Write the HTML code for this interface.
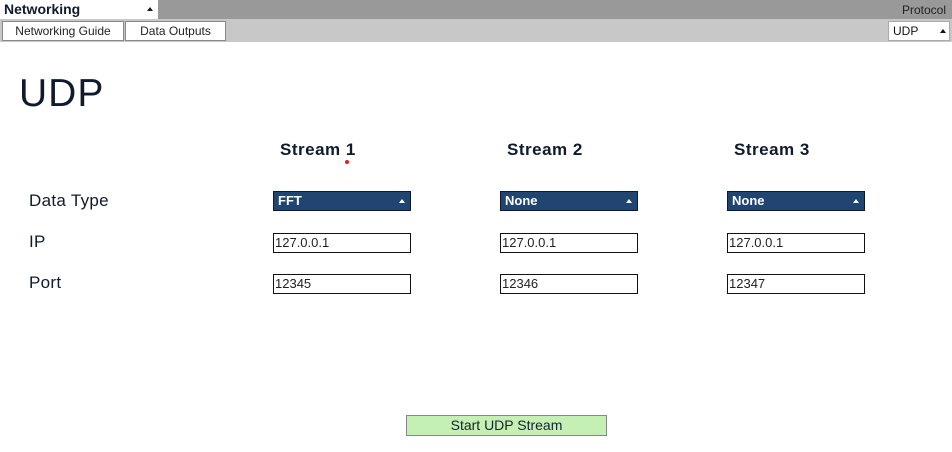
<!DOCTYPE html>
<html><head><meta charset="utf-8"><style>
*{margin:0;padding:0;box-sizing:border-box}
body{width:952px;height:452px;background:#fff;font-family:"Liberation Sans","DejaVu Sans",sans-serif;position:relative;overflow:hidden;color:#0f1b2d}
.abs{position:absolute}
.bar1{left:0;top:0;width:952px;height:19px;background:#999}
.bar2{left:0;top:19px;width:952px;height:23px;background:#c8c8c8}
.net{left:0;top:0;width:158px;height:19px;background:#fff;font-weight:bold;font-size:14px;padding-left:4px;line-height:19px;color:#0f1b2d}
.tri{position:absolute;width:0;height:0;border-left:3px solid transparent;border-right:3px solid transparent;border-bottom:4px solid currentColor}
.tab{top:21px;height:20px;background:#fff;border:1px solid #888;font-size:12px;line-height:18px;text-align:center;color:#222}
.proto{right:6px;top:3px;font-size:12px;color:#222}
.udpsel{left:888px;top:21px;width:62px;height:20px;background:#fff;border:1px solid #aaa;font-size:12px;line-height:18px;padding-left:4px;color:#111}
h1{position:absolute;left:19px;top:72px;font-size:39px;font-weight:normal;letter-spacing:1px;color:#0f1b2d}
.sh{top:140px;font-size:17px;font-weight:bold;letter-spacing:.5px}
.lab{left:29px;font-size:17px;letter-spacing:.3px}
.dd{width:138px;height:20px;background:#1f4570;border:1px solid #0f1b2d;color:#fff;font-size:13px;font-weight:bold;line-height:18px;padding-left:4px}
.in{width:138px;height:20px;border:1px solid #111;background:#fff;font-size:13px;line-height:18px;padding-left:1px;color:#222}
.btn{left:406px;top:415px;width:201px;height:21px;background:#c4f0b4;border:1px solid #888;font-size:14px;text-align:center;line-height:19px;color:#1a2230}
</style></head><body>
<div class="abs bar1"></div>
<div class="abs bar2"></div>
<div class="abs net">Networking<span class="tri" style="left:147px;top:7px;color:#0f1b2d"></span></div>
<div class="abs proto">Protocol</div>
<div class="abs tab" style="left:2px;width:122px">Networking Guide</div>
<div class="abs tab" style="left:125px;width:101px">Data Outputs</div>
<div class="abs udpsel">UDP<span class="tri" style="left:51px;top:7px;color:#111"></span></div>
<h1>UDP</h1>
<div class="abs sh" style="left:280px">Stream 1</div>
<div class="abs" style="left:345px;top:160px;width:4px;height:4px;border-radius:2px;background:#e02020"></div>
<div class="abs sh" style="left:507px">Stream 2</div>
<div class="abs sh" style="left:734px">Stream 3</div>
<div class="abs lab" style="top:191px">Data Type</div>
<div class="abs lab" style="top:232px">IP</div>
<div class="abs lab" style="top:273px">Port</div>

<div class="abs dd" style="left:273px;top:191px">FFT<span class="tri" style="left:125px;top:7px;color:#fff"></span></div>
<div class="abs dd" style="left:500px;top:191px">None<span class="tri" style="left:125px;top:7px;color:#fff"></span></div>
<div class="abs dd" style="left:727px;top:191px">None<span class="tri" style="left:125px;top:7px;color:#fff"></span></div>

<div class="abs in" style="left:273px;top:233px">127.0.0.1</div>
<div class="abs in" style="left:500px;top:233px">127.0.0.1</div>
<div class="abs in" style="left:727px;top:233px">127.0.0.1</div>

<div class="abs in" style="left:273px;top:274px">12345</div>
<div class="abs in" style="left:500px;top:274px">12346</div>
<div class="abs in" style="left:727px;top:274px">12347</div>

<div class="abs btn">Start UDP Stream</div>
</body></html>
